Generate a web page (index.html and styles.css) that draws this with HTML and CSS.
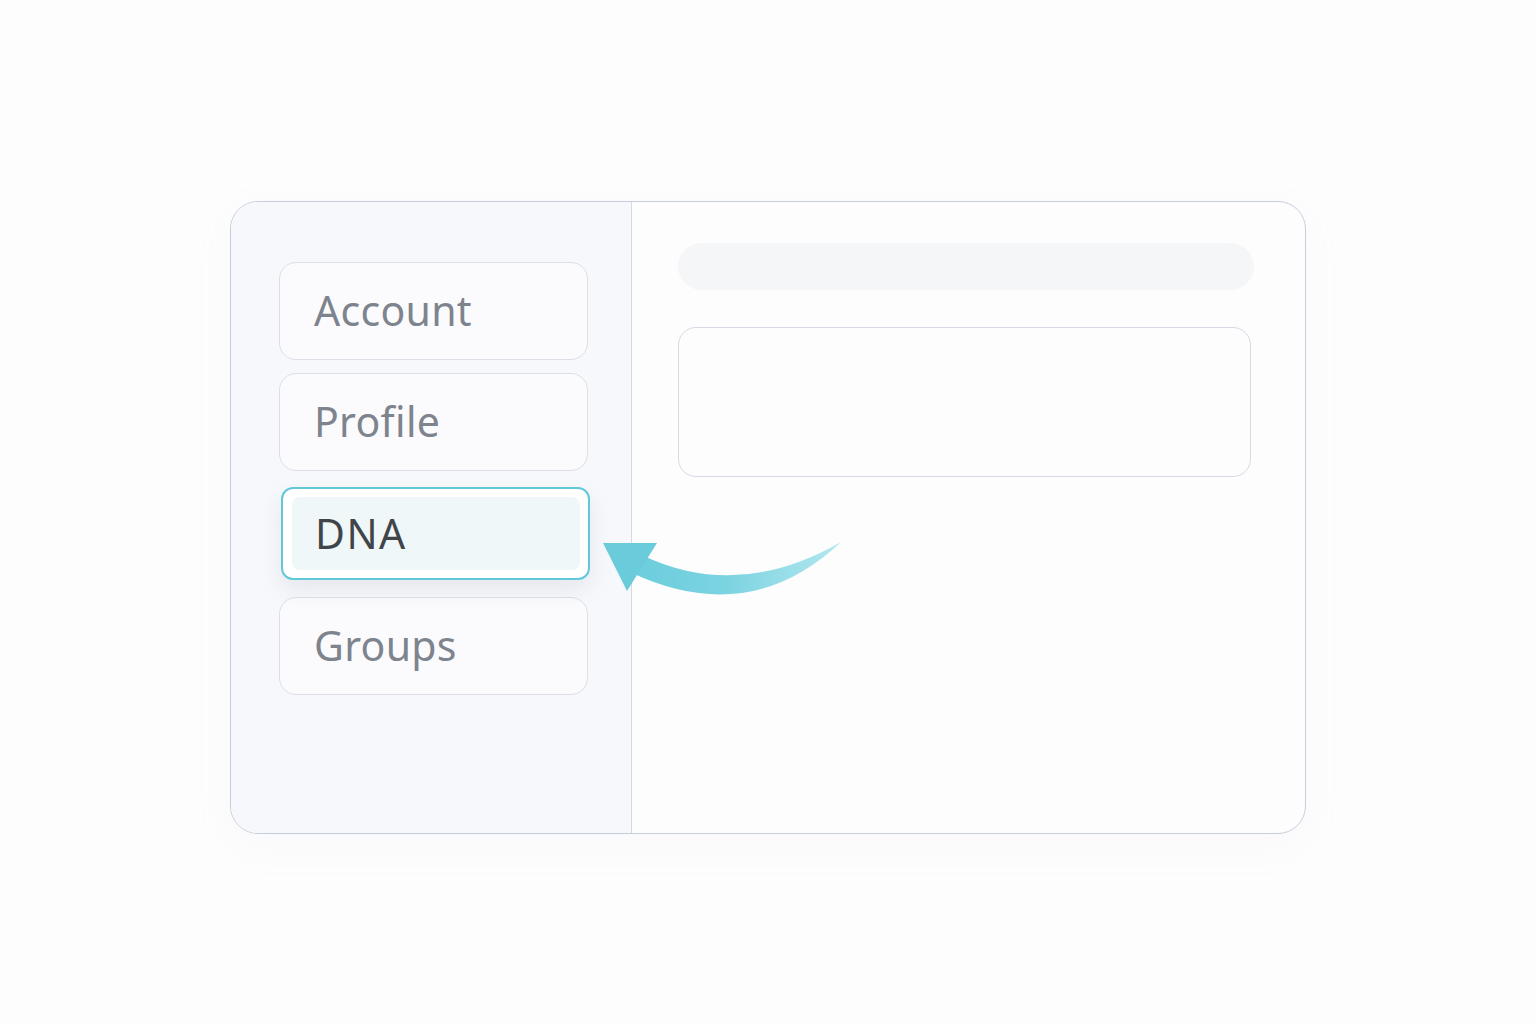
FILE: index.html
```html
<!DOCTYPE html>
<html>
<head>
<meta charset="utf-8">
<link rel="stylesheet" href="styles.css">
</head>
<body>
<div class="card">
  <nav class="side">
    <div class="item item-account"><span>Account</span></div>
    <div class="item item-profile"><span>Profile</span></div>
    <div class="item active"><div class="active-fill"><span>DNA</span></div></div>
    <div class="item item-groups"><span>Groups</span></div>
  </nav>
  <main class="content">
    <div class="bar"></div>
    <div class="box"></div>
  </main>
  <svg class="arrow" width="260" height="70" viewBox="600 530 260 70">
    <defs>
      <linearGradient id="g" x1="600" y1="0" x2="845" y2="0" gradientUnits="userSpaceOnUse">
        <stop offset="0" stop-color="#66cbdb"/>
        <stop offset="0.5" stop-color="#7ad3e0"/>
        <stop offset="1" stop-color="#b4e8f0"/>
      </linearGradient>
    </defs>
    <path d="M646 557 Q740 600 841 542 Q750 628 632 573 Z" fill="url(#g)"/>
    <path d="M603 543 L657 543 L627 591 Z" fill="#6accdb"/>
  </svg>
</div>
</body>
</html>
```
FILE: styles.css
```css
html, body {
  margin: 0;
  padding: 0;
  background: #fdfdfe;
  width: 1536px;
  height: 1024px;
  overflow: hidden;
  font-family: "Noto Sans", "Open Sans", sans-serif;
}
.card {
  position: relative;
  margin: 201px 0 0 230px;
  width: 1076px;
  height: 633px;
  box-sizing: border-box;
  border: 1.5px solid #c7cddb;
  border-radius: 28px;
  display: flex;
  overflow: visible;
  background: #fdfdfe;
  box-shadow: 0 12px 40px rgba(180, 188, 205, 0.06);
}
.side {
  width: 401px;
  box-sizing: border-box;
  background: #f7f8fb;
  border-right: 1.5px solid #d5d9e3;
  border-radius: 27px 0 0 27px;
  padding: 60px 0 0 48px;
  display: flex;
  flex-direction: column;
}
.item {
  width: 309px;
  height: 98px;
  box-sizing: border-box;
  border: 1.5px solid #dcdfe7;
  border-radius: 17px;
  background: #fbfbfd;
  display: flex;
  align-items: center;
  padding-left: 34px;
  font-size: 41px;
  color: #7e848d;
  letter-spacing: 0.3px;
}
.item span { position: relative; top: -1px; }
.item-profile { margin-top: 13px; }
.item.active {
  margin-top: 16px;
  margin-left: 2px;
  width: 309px;
  height: 93px;
  border: 2px solid #62c8d9;
  border-radius: 12px;
  background: #ffffff;
  padding: 8px 8px 8px 9px;
  box-shadow: 0 10px 22px rgba(150, 160, 185, 0.18);
  position: relative;
  z-index: 1;
}
.active-fill {
  flex: 1;
  height: 100%;
  background: #eff7f9;
  border-radius: 8px;
  display: flex;
  align-items: center;
  padding-left: 23px;
  color: #3f4549;
  letter-spacing: 1.5px;
}
.item-groups { margin-top: 17px; }
.content {
  flex: 1;
  padding: 41px 0 0 46px;
  display: flex;
  flex-direction: column;
}
.bar {
  width: 576px;
  height: 47px;
  border-radius: 24px;
  background: #f5f6f8;
}
.box {
  margin-top: 37px;
  width: 573px;
  height: 150px;
  box-sizing: border-box;
  border: 1.5px solid #d6dae5;
  border-radius: 18px;
  background: #fdfdfe;
}
.arrow {
  position: absolute;
  left: 369px;
  top: 328px;
  z-index: 2;
}
```
